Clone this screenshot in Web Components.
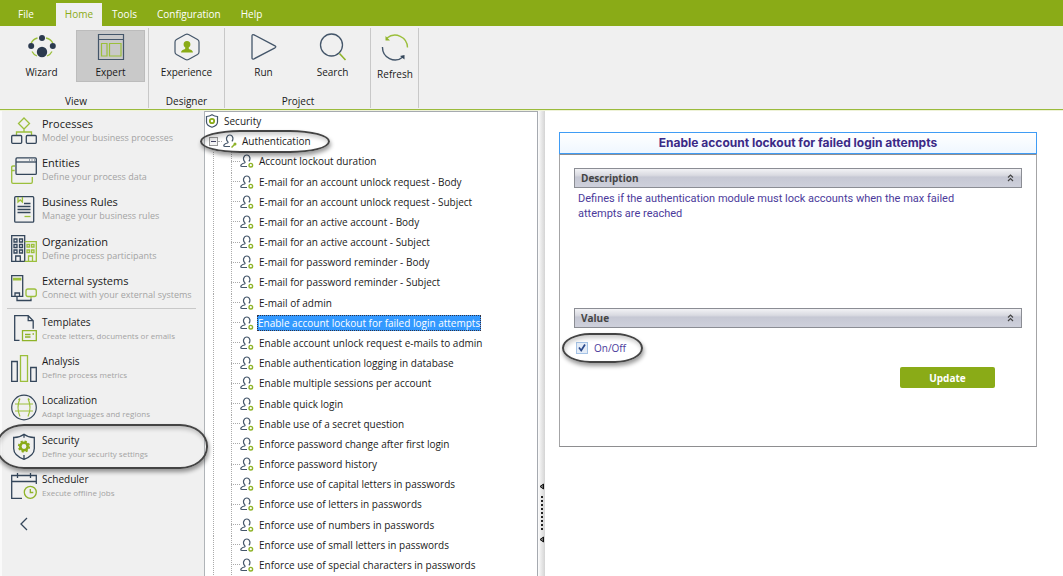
<!DOCTYPE html>
<html lang="en">
<head>
<meta charset="utf-8">
<title>Studio - Security</title>
<style>
  body { margin: 0; font: 10px/14px "Open Sans", "Noto Sans", sans-serif; color: #1a1a1a; background: #fff; overflow-x: hidden; }
</style>
</head>
<body>
<studio-app></studio-app>
<script>
const ICONS = {
  wizard: ['0 0 28 24', '<g fill="none" stroke="#9bbf3b" stroke-width="1.3"><path d="M3 8.500Q5 4 9.500 3M18 3q5 1 7 5.500M4 16.500q1.500 3 5 4.500M24 16.500q-1.500 3-5 4.500"/></g><g fill="#2b3a4f"><circle cx="14" cy="3" r="3"/><circle cx="3.200" cy="11" r="3"/><circle cx="24.800" cy="11" r="3"/><circle cx="14" cy="17" r="5.200"/></g>'],
  expert: ['0 0 28 28', '<g fill="none"><path stroke="#44566a" stroke-width="1.200" d="M1.500 1.500h25v25h-25zM1.500 6.500h25"/><path stroke="#9bbf3b" stroke-width="1.200" d="M4.500 10.500h5.500v12.500H4.500zM12.500 10.500h11.500v12.500H12.500z"/></g>'],
  experience: ['0 0 28 28', '<path fill="none" stroke="#44566a" stroke-width="1.200" d="M12.500 1.500q1.500-.8 3 0l9 5q1.500.9 1.500 2.500v10q0 1.600-1.500 2.500l-9 5q-1.500.8-3 0l-9-5Q2 20.600 2 19V9q0-1.600 1.500-2.500z"/><path fill="#8aab17" d="M14 8a3.400 3.400 0 0 1 3.400 3.500c0 1.300-.7 2.400-1.700 3l.2 1.500c1.500 1 3.800.7 4 3.500H8.100c.2-2.800 2.500-2.500 4-3.500l.2-1.500c-1-.6-1.700-1.700-1.700-3A3.400 3.400 0 0 1 14 8z"/>'],
  run: ['0 0 28 28', '<path fill="none" stroke="#44566a" stroke-width="1.300" stroke-linejoin="round" d="M2 3q0-2 2-1.200l21 11q1.600 1 0 2l-21 11Q2 26.500 2 25z"/>'],
  search: ['0 0 28 28', '<circle cx="12.500" cy="12" r="11" fill="none" stroke="#44566a" stroke-width="1.300"/><path stroke="#8fb329" stroke-width="1.600" d="M20.500 20.500l6 6.500"/>'],
  refresh: ['0 0 28 28', '<g fill="none" stroke-width="1.400"><path stroke="#9bbf3b" d="M6 5A12.500 12.500 0 0 1 26.500 14.500"/><path stroke="#44566a" d="M1.500 14A12.500 12.500 0 0 0 22 24"/></g><path fill="#8fb329" d="M4.500 3v4.500h4.500z"/><path fill="#34465a" d="M23.500 22v4.500l-4.500-3.500z"/>'],
  processes: ['0 0 26 27', '<g fill="none" stroke-width="1.300"><path stroke="#9bbf3b" d="M13 1l5.500 5.500L13 12 7.500 6.500zM13 12v3M5.500 18v-3h15v3"/><g stroke="#34465a"><rect x=".7" y="18.500" width="10" height="7.800" rx="1"/><rect x="15.300" y="18.500" width="10" height="7.800" rx="1"/></g></g>'],
  entities: ['0 0 26 27', '<g fill="none" stroke-width="1.300"><path stroke="#9bbf3b" d="M4 9H2q-1.300 0-1.300 1.300V25q0 1.300 1.300 1.300h18q1.300 0 1.300-1.300v-5M.7 13.500h3"/><rect stroke="#34465a" x="5" y=".9" width="20.300" height="16.500" rx="1"/><path stroke="#34465a" d="M5 5h20.300"/></g><path stroke="#44566a" d="M18 3h1M20.500 3h1M23 3h1"/>'],
  rules: ['0 0 26 27', '<g fill="none" stroke-width="1.300"><rect stroke="#34465a" x="3.700" y=".7" width="19" height="25.500" rx="1"/><path stroke="#9bbf3b" d="M7 1v5l2.200-2 2.200 2V1"/><path stroke="#34465a" d="M13 7.500h6.500M6.500 10.500h13M6.500 13.500h13M6.500 16.500h13"/><path stroke="#9bbf3b" d="M13.500 20.500h6"/></g>'],
  organization: ['0 0 26 27', '<g fill="none" stroke-width="1.300"><path stroke="#34465a" d="M.7 26.300V.7h13v25.600zM4.700 26v-5h4.600v5M3 4h3v3H3zM8.500 4h3v3h-3zM3 9.500h3v3H3zM8.500 9.500h3v3h-3zM3 15h3v3H3zM8.500 15h3v3h-3z"/><path stroke="#9bbf3b" d="M13.700 6.700h11.600v19.600H13.700M17.500 26v-5h4v5M16 9.500h2.500V12H16zM20.500 9.500H23V12h-2.500zM16 15h2.500v2.500H16zM20.500 15H23v2.500h-2.500z"/></g>'],
  external: ['0 0 26 27', '<g fill="none" stroke-width="1.300"><path stroke="#34465a" d="M.7.7h11v20.600H.7zM4 21v-3h4.500v3M6 21.500v4h14v-2"/><path stroke="#9bbf3b" d="M2.700 3.500h7v1.300h-7z"/><rect stroke="#9bbf3b" x="15" y="14" width="10.300" height="7.500" rx="2"/><path stroke="#9bbf3b" d="M20 21.500v2"/></g>'],
  templates: ['0 0 26 27', '<g fill="none" stroke-width="1.300"><path stroke="#34465a" d="M8.500 25.300H3.700V.7h13.500l5 5v8M17.200.7v5h5"/><path stroke="#8fb329" d="M11.500 15.700h13.800v10H11.500zM14 19.500h5.500M14 22h5.500M21.500 19h1.500"/></g>'],
  analysis: ['0 0 26 27', '<g fill="none" stroke-width="1.300"><path stroke="#34465a" d="M.7 6.500h5.600v19.800H.7zM19.700 12.500h5.600v13.800h-5.600z"/><path stroke="#9bbf3b" d="M9.500.7h7v25.600h-7z"/></g>'],
  localization: ['0 0 26 27', '<g fill="none" stroke-width="1.200"><circle cx="13" cy="13.500" r="12.300" stroke="#34465a"/><path stroke="#9bbf3b" d="M9 4.500q-4 9 0 18M17 4.500q4 9 0 18M4 10h18M4 17h18M9 4.500L7.500 6M17 4.500L18.500 6"/></g>'],
  security: ['0 0 26 27', '<path fill="none" stroke="#34465a" stroke-width="1.300" d="M13 .8v4M13 22v4.500M13 1.200Q8.500 4.700 2.700 4.500v11q0 7 10.300 10.800Q23.300 22.500 23.300 15.500v-11Q17.500 4.700 13 1.200z"/><circle cx="13" cy="13.500" r="3.700" fill="none" stroke="#8aab17" stroke-width="2.600"/><circle cx="13" cy="13.500" r="5.300" fill="none" stroke="#8aab17" stroke-width="1.600" stroke-dasharray="2.200 1.960"/>'],
  scheduler: ['0 0 26 27', '<g fill="none" stroke-width="1.300"><path stroke="#34465a" d="M11 25.300H.7V2.500h24.600V11M.7 8.500h24.600M6.500 0v5M19.500 0v5"/><circle cx="19.300" cy="19.300" r="6" stroke="#8fb329"/><path stroke="#8fb329" d="M19.300 16v3.500h3"/></g>'],
  back: ['0 0 8 14', '<path fill="none" stroke="#34465a" stroke-width="1.300" d="M7 1L1 7l6 6"/>'],
  shield: ['0 0 14 14', '<path fill="none" stroke="#44566a" stroke-width="1.200" d="M7 .8Q4.500 2.500 1.500 2.500v5.500q0 3.500 5.500 5.300 5.500-1.800 5.500-5.300V2.500Q9.500 2.500 7 .8z"/><circle cx="7" cy="7" r="2.200" fill="none" stroke="#8aab17" stroke-width="1.800"/>'],
  user: ['0 0 14 14', '<path fill="none" stroke="#44566a" stroke-width="1.200" d="M7 12.500H2q-2 0-.7-1.800Q2 9.500 4.500 9q1-.5.200-1.400Q3 6 3.700 3.500 4.500 1 6.800 1t3 2.500q.5 2.200-.9 3.900"/><circle cx="10.800" cy="11.200" r="1.800" fill="none" stroke="#8fb329" stroke-width="1.400"/>'],
  userkey: ['0 0 14 14', '<path fill="none" stroke="#44566a" stroke-width="1.200" d="M7 12.500H2q-2 0-.7-1.800Q2 9.500 4.500 9q1-.5.200-1.400Q3 6 3.700 3.500 4.500 1 6.800 1t3 2.500q.5 2.200-.9 3.900"/><path stroke="#8fb329" stroke-width="1.500" d="M8.500 13.500l3-3"/><circle cx="12" cy="10" r="1.500" fill="#8fb329"/>'],
  chevrons: ['0 0 7 8', '<path fill="none" stroke="#444" stroke-width="1.200" d="M1 3.500L3.500 1 6 3.500M1 7l2.500-2.500L6 7"/>']
};

/* Registers an element whose shadow root is built from its attributes. */
function define(name, render) {
  customElements.define(name, class extends HTMLElement {
    constructor() { super(); this.attachShadow({ mode: 'open' }); }
    connectedCallback() {
      const t = document.createElement('template');
      t.innerHTML = render(this);
      this.shadowRoot.replaceChildren(t.content.cloneNode(true));
    }
  });
}
const attr = (el, n) => el.getAttribute(n) || '';

define('app-icon', el => {
  const [box, body] = ICONS[attr(el, 'name')];
  const [, , w, h] = box.split(' ');
  return `<style>:host{display:block;flex:none;width:${w}px;height:${h}px}svg{display:block;width:100%;height:100%}</style>
  <svg viewBox="${box}" aria-hidden="true">${body}</svg>`;
});

/* Hand-drawn style outline laid over the element that contains it. */
define('call-out', () => `<style>
  :host{position:absolute;z-index:2;pointer-events:none;box-sizing:border-box;border:2px solid #444;
    box-shadow:1px 3px 4px rgba(0,0,0,.4),inset 1px 3px 4px rgba(0,0,0,.2)}
</style>`);

define('menu-bar', () => `<style>
  :host{display:flex;height:26px;background:#8aab17;box-sizing:border-box;padding:3px 0 0 8px}
  a{display:flex;align-items:center;color:#fff;text-decoration:none;padding:0 10px 2px}
  a.on{background:#f0f0f0;color:#8aab17;padding:0 9px 2px}
  .file{margin-right:12px}
</style>
<a class="file" href="#file">File</a><a class="on" href="#home">Home</a><a href="#tools">Tools</a><a href="#configuration">Configuration</a><a href="#help">Help</a>`);

define('ribbon-button', el => `<style>
  :host{display:block}
  button{font:inherit;color:inherit;border:1px solid transparent;background:none;padding:3px 0 2px;margin:0;width:69px;height:52px;
    display:flex;flex-direction:column;align-items:center;justify-content:space-between;box-sizing:border-box}
  .pic{height:26px;display:flex;align-items:center}
  :host([selected]) button{background:#c9c9c9;border-color:#bcbcbc}
  :host([narrow]) button{width:46px;height:54px}
</style>
<button><span class="pic"><app-icon name="${attr(el, 'icon')}"></app-icon></span><span><slot></slot></span></button>`);

define('ribbon-group', el => `<style>
  :host{display:flex;flex-direction:column;justify-content:space-between;padding:2px 3px 0 0;border-right:1px solid #c8c8c8;box-sizing:border-box}
  .row{display:flex}
  .name{text-align:center}
</style>
<div class="row"><slot></slot></div><div class="name">${attr(el, 'label')}</div>`);

define('ribbon-bar', () => `<style>
  :host{display:flex;height:84px;box-sizing:border-box;background:#f0f0f0;border-bottom:1px solid #9bbb3c;padding:2px 0 1px 7px}
  ribbon-group.experience{padding-left:3px}
  ribbon-group.project{padding-left:4px}
  ribbon-group.refresh{padding-left:1px;padding-right:0}
</style>
<ribbon-group label="View"><ribbon-button icon="wizard">Wizard</ribbon-button><ribbon-button icon="expert" selected>Expert</ribbon-button></ribbon-group>
<ribbon-group class="experience" label="Designer"><ribbon-button icon="experience">Experience</ribbon-button></ribbon-group>
<ribbon-group class="project" label="Project"><ribbon-button icon="run">Run</ribbon-button><ribbon-button icon="search">Search</ribbon-button></ribbon-group>
<ribbon-group class="refresh" label=""><ribbon-button icon="refresh" narrow>Refresh</ribbon-button></ribbon-group>`);

define('nav-item', el => `<style>
  :host{display:flex;align-items:center;position:relative}
  a{display:flex;align-items:center;gap:5px;color:#1a1a1a;text-decoration:none;padding-left:11px;white-space:nowrap}
  b{display:block;font-weight:400;font-size:11px;line-height:14px}
  small{display:block;color:#a3a3a3;font-size:9px;line-height:14px}
  :host([minor]) b{font-size:10px;line-height:13px}
  :host([minor]) small{font-size:8px;line-height:13px}
  call-out{left:-4px;right:-4px;top:-3px;bottom:-2px;border-radius:28px/22px}
</style>
<a href="#${attr(el, 'icon')}"><app-icon name="${attr(el, 'icon')}"></app-icon><span><b>${attr(el, 'label')}</b><small>${attr(el, 'note')}</small></span></a>
${el.hasAttribute('marked') ? '<call-out></call-out>' : ''}`);

define('side-nav', () => `<style>
  :host{display:block;background:linear-gradient(90deg,#fafafa 2px,#f0f0f0 2px);border-right:1px solid #b0b4b8;box-sizing:border-box}
  .set{display:grid;grid-template-rows:repeat(5,1fr);min-height:197px}
  hr{border:0;border-top:1px solid #c8c8c8;margin:0 8px 0 7px}
  button{border:0;background:none;padding:0;margin:11px 0 0 20px;display:block}
</style>
<nav>
<div class="set">
<nav-item icon="processes" label="Processes" note="Model your business processes"></nav-item>
<nav-item icon="entities" label="Entities" note="Define your process data"></nav-item>
<nav-item icon="rules" label="Business Rules" note="Manage your business rules"></nav-item>
<nav-item icon="organization" label="Organization" note="Define process participants"></nav-item>
<nav-item icon="external" label="External systems" note="Connect with your external systems"></nav-item>
</div><hr>
<div class="set">
<nav-item minor icon="templates" label="Templates" note="Create letters, documents or emails"></nav-item>
<nav-item minor icon="analysis" label="Analysis" note="Define process metrics"></nav-item>
<nav-item minor icon="localization" label="Localization" note="Adapt languages and regions"></nav-item>
<nav-item minor marked icon="security" label="Security" note="Define your security settings"></nav-item>
<nav-item minor icon="scheduler" label="Scheduler" note="Execute offline jobs"></nav-item>
</div>
<button aria-label="Collapse"><app-icon name="back"></app-icon></button>
</nav>`);

define('tree-row', el => `<style>
  :host{display:flex;align-items:center;position:relative;white-space:nowrap;padding:0 0 2px;--dots:#aaa}
  :host([level="1"]){padding-left:4px}
  :host([level="2"]){padding-left:26px;background:
    repeating-linear-gradient(var(--dots) 0 1px,transparent 1px 2px) 8px 0/1px 100% no-repeat,
    repeating-linear-gradient(var(--dots) 0 1px,transparent 1px 2px) 26px 0/1px 100% no-repeat}
  i{width:9px;border-top:1px dotted var(--dots)}
  .box{width:7px;height:7px;border:1px solid #999;background:linear-gradient(#446,#446) center/5px 1px no-repeat #f4f4f4}
  .box+i{width:4px;margin-right:1px}
  app-icon{margin-right:3px}
  span{padding:0 1px;border:1px solid transparent}
  :host([selected]) span{background:#3399ff;color:#fff;border:1px dotted #334;padding:0}
  call-out{left:-5px;width:130px;top:-2px;bottom:-1px;border-radius:42px/12px}
</style>
${attr(el, 'level') === '1' ? '<div class="box"></div><i></i>' : attr(el, 'level') === '2' ? '<i></i>' : ''}
<app-icon name="${attr(el, 'icon')}"></app-icon><span><slot></slot></span>
${el.hasAttribute('marked') ? '<call-out></call-out>' : ''}`);

const SETTINGS = ['Account lockout duration', 'E-mail for an account unlock request - Body', 'E-mail for an account unlock request - Subject',
  'E-mail for an active account - Body', 'E-mail for an active account - Subject', 'E-mail for password reminder - Body',
  'E-mail for password reminder - Subject', 'E-mail of admin', 'Enable account lockout for failed login attempts',
  'Enable account unlock request e-mails to admin', 'Enable authentication logging in database', 'Enable multiple sessions per account',
  'Enable quick login', 'Enable use of a secret question', 'Enforce password change after first login', 'Enforce password history',
  'Enforce use of capital letters in passwords', 'Enforce use of letters in passwords', 'Enforce use of numbers in passwords',
  'Enforce use of small letters in passwords', 'Enforce use of special characters in passwords'];

define('setting-tree', () => `<style>
  :host{display:grid;grid-auto-rows:minmax(20px,1fr);background:#fff;border:1px solid #a6aab0;border-width:1px 1px 0 0;box-sizing:border-box}
</style>
<tree-row level="0" icon="shield">Security</tree-row>
<tree-row level="1" icon="userkey" marked>Authentication</tree-row>
${SETTINGS.map((s, n) => `<tree-row level="2" icon="user"${n === 8 ? ' selected' : ''}>${s}</tree-row>`).join('')}`);

define('split-bar', () => `<style>
  :host{display:flex;flex-direction:column;align-items:center;justify-content:flex-end;gap:6px;box-sizing:border-box;padding-bottom:33px;
    background:linear-gradient(90deg,#fdfdfd,#d4d4d4)}
  svg{display:block;width:5px;height:7px}
  .grip{width:2px;height:34px;background:repeating-linear-gradient(#222 0 2px,transparent 2px 4px)}
</style>
<svg viewBox="0 0 5 7"><path d="M4.500 1v5L1 3.500z" fill="#777" stroke="#111"/></svg>
<div class="grip"></div>
<svg viewBox="0 0 5 7"><path d="M4.500 1v5L1 3.500z" fill="#777" stroke="#111"/></svg>`);

define('panel-section', el => `<style>
  :host{display:block}
  h3{display:flex;align-items:center;justify-content:space-between;margin:0;font-size:10px;line-height:16px;height:20px;box-sizing:border-box;
    color:#444;border:1px solid #8b8d94;padding:0 7px 0 6px;
    background:linear-gradient(#f2f2f5,#d9dae1 35%,#c6c8d4 45%,#ced0db)}
</style>
<h3>${attr(el, 'label')}<app-icon name="chevrons"></app-icon></h3>
<slot></slot>`);

define('setting-form', () => `<style>
  :host{display:block;padding:21px 26px 20px 14px;color:#4b3a9b}
  h2{margin:0;font:bold 12px/20px Inter,"Open Sans",sans-serif;text-align:center;color:#3b2a86;border:1px solid #3f9cf5;background:linear-gradient(#fff,#eff7ff);height:22px;box-sizing:border-box}
  .body{border:1px solid #8e8e90;border-right-color:#a4a4a6;border-left-color:#a4a4a6;padding:13px 14px 57px;min-height:293px;box-sizing:border-box}
  p{font:11px/15px Roboto,"Open Sans",sans-serif;margin:3px 0 0 4px;max-width:400px;min-height:117px}
  .line{position:relative;display:flex;align-items:center;width:64px;height:24px;margin:8px 0 0 2px}
  label{display:flex;align-items:center;gap:6px;font-size:10px}
  input{appearance:none;margin:0;width:12px;height:12px;box-sizing:border-box;border:1px solid #a5c3e6;
    background:url("data:image/svg+xml,%3Csvg xmlns='http://www.w3.org/2000/svg' viewBox='0 0 10 10'%3E%3Cpath d='M2 4.500l2.200 3L8 1.500' fill='none' stroke='%232b4a8c' stroke-width='1.700'/%3E%3C/svg%3E") center/10px 10px no-repeat #e4ecf7}
  call-out{left:-14px;right:-3px;top:-3px;bottom:-3px;border-radius:28px/15px}
  .act{display:flex;justify-content:flex-end;padding:7px 27px 0 0}
  .act button{font:bold 10px/14px "Open Sans",sans-serif;color:#fff;background:#8aab17;border:0;border-radius:2px;width:95px;height:21px;padding:0}
</style>
<h2>Enable account lockout for failed login attempts</h2>
<div class="body">
<panel-section label="Description"><p>Defines if the authentication module must lock accounts when the max failed attempts are reached</p></panel-section>
<panel-section label="Value">
<div class="line"><label><input type="checkbox" checked>On/Off</label><call-out></call-out></div>
<div class="act"><button>Update</button></div>
</panel-section>
</div>`);

define('studio-app', () => `<style>
  :host{display:flex;flex-direction:column;min-height:100vh}
  main{flex:1;display:grid;grid-template-columns:205px minmax(333px,auto) 7px 1fr;padding-top:1px;background:linear-gradient(#eef2d8,#eef2d8) 0 0/100% 1px no-repeat}
  @media(min-width:900px){main{grid-template-columns:205px 333px 7px 1fr}}
</style>
<menu-bar></menu-bar>
<ribbon-bar></ribbon-bar>
<main><side-nav></side-nav><setting-tree></setting-tree><split-bar></split-bar><setting-form></setting-form></main>`);
</script>
</body>
</html>
